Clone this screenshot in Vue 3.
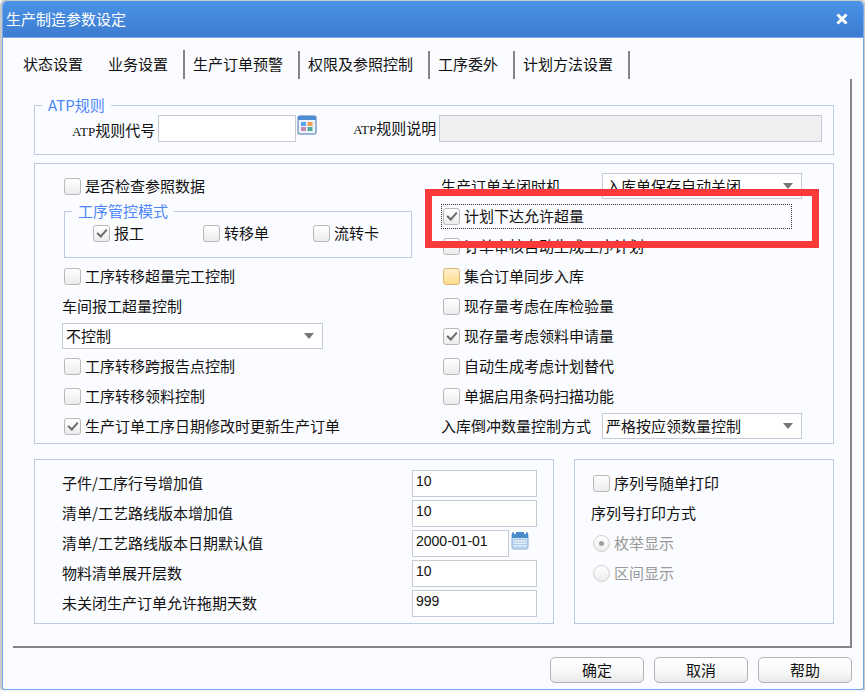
<script setup>
import {ref, reactive} from "vue";

const tabs = ["状态设置", "业务设置", "生产订单预警", "权限及参照控制", "工序委外", "计划方法设置"]
const activeTab = ref(1)

const atp = reactive({code: "", desc: ""})

const modes = ref([
  {label: "报工", checked: true},
  {label: "转移单", checked: false},
  {label: "流转卡", checked: false},
])

const checkReference = ref(false)
const overFinish = ref(false)
const reportControl = ref("不控制")
const leftOptions = ref([
  {label: "工序转移跨报告点控制", checked: false},
  {label: "工序转移领料控制", checked: false},
  {label: "生产订单工序日期修改时更新生产订单", checked: true},
])

const closeTiming = ref("入库单保存自动关闭")
const backflush = ref("严格按应领数量控制")
const rightOptions = ref([
  {label: "计划下达允许超量", checked: true, focused: true},
  {label: "订单审核自动生成工序计划", checked: false},
  {label: "集合订单同步入库", checked: false, hot: true},
  {label: "现存量考虑在库检验量", checked: false},
  {label: "现存量考虑领料申请量", checked: true},
  {label: "自动生成考虑计划替代", checked: false},
  {label: "单据启用条码扫描功能", checked: false},
])

const defaults = ref([
  {label: "子件/工序行号增加值", value: "10"},
  {label: "清单/工艺路线版本增加值", value: "10"},
  {label: "清单/工艺路线版本日期默认值", value: "2000-01-01", date: true},
  {label: "物料清单展开层数", value: "10"},
  {label: "未关闭生产订单允许拖期天数", value: "999"},
])

const printSerial = ref(false)
const printMode = ref("枚举显示")
</script>

<template>
  <main class="dialog">
    <header class="title-bar">
      <h1>生产制造参数设定</h1>
      <button class="close" type="button" aria-label="关闭">
        <svg width="12" height="12" viewBox="0 0 12 12">
          <path d="M1.500 1.500L10.500 10.500M10.500 1.500L1.500 10.500" stroke="#fff" stroke-width="3"/>
        </svg>
      </button>
    </header>

    <nav class="tabs">
      <button
          v-for="(tab, index) in tabs"
          :key="tab"
          type="button"
          :class="['tab', { active: index == activeTab }]"
          @click="activeTab = index">
        {{ tab }}
      </button>
    </nav>

    <section class="panel">
      <fieldset class="group atp">
        <legend>ATP规则</legend>
        <div class="atp-row">
          <label class="code-label" for="atp-code"><span class="latin">ATP</span>规则代号</label>
          <input id="atp-code" class="text code" type="text" v-model="atp.code"/>
          <button class="icon-button" type="button" aria-label="选择规则">
            <svg width="20" height="20" viewBox="0 0 20 20">
              <rect x="1" y="1" width="18" height="18" rx="2" fill="#eef4fc" stroke="#7d9fcb" stroke-width="1.5"/>
              <path d="M1 5V2.500Q1 1 2.500 1H17.500Q19 1 19 2.500V5Z" fill="#4f8bd0"/>
              <rect x="4" y="7" width="5" height="4" fill="#5aa5f0"/>
              <rect x="10.500" y="7" width="5" height="4" fill="#f0a050"/>
              <rect x="4" y="12" width="5" height="4" fill="#c888b8"/>
              <rect x="10.500" y="12" width="5" height="4" fill="#50aaa0"/>
            </svg>
          </button>
          <label class="desc-label" for="atp-desc"><span class="latin">ATP</span>规则说明</label>
          <input id="atp-desc" class="text desc" type="text" v-model="atp.desc" disabled/>
        </div>
      </fieldset>

      <div class="group business">
        <div class="column">
          <label class="row check">
            <input type="checkbox" v-model="checkReference"/>
            <span>是否检查参照数据</span>
          </label>
          <fieldset class="group modes">
            <legend>工序管控模式</legend>
            <div class="mode-list">
              <label v-for="mode in modes" :key="mode.label" class="check">
                <input type="checkbox" v-model="mode.checked"/>
                <span>{{ mode.label }}</span>
              </label>
            </div>
          </fieldset>
          <label class="row check">
            <input type="checkbox" v-model="overFinish"/>
            <span>工序转移超量完工控制</span>
          </label>
          <label class="row" for="report-control">车间报工超量控制</label>
          <div class="row">
            <div class="select wide">
              <select id="report-control" v-model="reportControl">
                <option>不控制</option>
                <option>严格控制</option>
              </select>
            </div>
          </div>
          <label v-for="item in leftOptions" :key="item.label" class="row check">
            <input type="checkbox" v-model="item.checked"/>
            <span>{{ item.label }}</span>
          </label>
        </div>

        <div class="column">
          <div class="row">
            <label class="select-label" for="close-timing">生产订单关闭时机</label>
            <div class="select">
              <select id="close-timing" v-model="closeTiming">
                <option>入库单保存自动关闭</option>
                <option>手工关闭</option>
              </select>
            </div>
          </div>
          <div v-for="item in rightOptions" :key="item.label" class="row option">
            <label :class="['check', { focused: item.focused }]">
              <input type="checkbox" :class="{ hot: item.hot }" v-model="item.checked"/>
              <span>{{ item.label }}</span>
            </label>
            <div v-if="item.focused" class="callout"></div>
          </div>
          <div class="row">
            <label class="select-label" for="backflush">入库倒冲数量控制方式</label>
            <div class="select">
              <select id="backflush" v-model="backflush">
                <option>严格按应领数量控制</option>
                <option>不控制</option>
              </select>
            </div>
          </div>
        </div>
      </div>

      <div class="bottom">
        <div class="group defaults">
          <div v-for="(item, index) in defaults" :key="item.label" class="row">
            <label :for="'default' + index">{{ item.label }}</label>
            <div class="field">
              <input :id="'default' + index" class="text" type="text" v-model="item.value"/>
              <button v-if="item.date" class="icon-button date" type="button" aria-label="选择日期">
                <svg width="18" height="20" viewBox="0 0 18 20">
                  <rect x="1" y="3" width="16" height="16" rx="2" fill="#cfe2f8" stroke="#7eaee0"/>
                  <path d="M1 8V4Q1 2 3 2H15Q17 2 17 4V8Z" fill="#4a8ccb"/>
                  <path d="M4 1V4M14 1V4" stroke="#fff" stroke-width="2"/>
                  <path d="M3 9.500H15V17H3ZM6 9.500V17M9 9.500V17M12 9.500V17M3 12H15M3 14.500H15" fill="#fff" stroke="#a9c8ea" stroke-width="1"/>
                </svg>
              </button>
            </div>
          </div>
        </div>

        <div class="group serial">
          <label class="row check">
            <input type="checkbox" v-model="printSerial"/>
            <span>序列号随单打印</span>
          </label>
          <div class="row">序列号打印方式</div>
          <label v-for="mode in ['枚举显示', '区间显示']" :key="mode" class="row check disabled">
            <input type="radio" name="print-mode" :value="mode" v-model="printMode" disabled/>
            <span>{{ mode }}</span>
          </label>
        </div>
      </div>
    </section>

    <footer class="actions">
      <button type="button">确定</button>
      <button type="button">取消</button>
      <button type="button">帮助</button>
    </footer>
  </main>
</template>

<style>
body {
  background-color: #f4f6f8;
}
</style>

<style scoped>
.dialog {
  margin: 1px 1px 0 2px;
  border: 1px solid #74a7ec;
  border-top: none;
  border-radius: 5px 5px 3px 3px;
  overflow: hidden;
  background-color: #fbfcff;
  box-shadow: 0 0 0 2px #c9c9c7;
  color: #111;
  font-family: "Noto Sans CJK SC", sans-serif;
  font-size: 15px;
  line-height: 20px;
}

button,
input,
select {
  box-sizing: border-box;
  margin: 0;
  font: inherit;
  color: inherit;
}

.title-bar {
  display: flex;
  align-items: center;
  justify-content: space-between;
  height: 36px;
  padding: 0 15px 0 3px;
  border-bottom: 1px solid #79aaf0;
  background: linear-gradient(#4a93e8, #3d7cd0);
  color: #fff;
}

h1 {
  margin: 0;
  font-size: 15px;
  font-weight: 400;
}

.close {
  display: flex;
  padding: 0;
  border: none;
  background: none;
}

.tabs {
  display: flex;
  align-items: flex-end;
  height: 29px;
  padding: 12px 12px 0;
}

.tab {
  height: 28px;
  padding: 0 15px 2px 8px;
  border: none;
  border-right: 2px solid #858683;
  background: none;
}

.tab:first-child {
  border-right-color: transparent;
}

.tab.active {
  height: 29px;
}

.panel {
  margin: 0 11px 0 10px;
  padding: 16px 16px 22px 21px;
  border-right: 2px solid #858683;
  border-bottom: 2px solid #858683;
}

.group {
  min-width: 0;
  margin: 0;
  border: 1px solid #bccde0;
}

legend {
  padding: 0 6px;
  color: #4b86fa;
}

.atp {
  padding: 0 11px 12px 7px;
}

.atp-row {
  display: flex;
  padding-left: 30px;
}

.latin {
  font-family: "Liberation Serif", serif;
  font-size: 13px;
}

.code-label {
  align-self: flex-end;
}

.desc-label {
  align-self: center;
  margin-left: 36px;
}

.text {
  height: 27px;
  padding: 0 3px 5px;
  border: 1px solid #c6cad4;
  border-radius: 0;
  background-color: #fff;
  font-family: "Liberation Sans", sans-serif;
  font-size: 14px;
}

.text.code {
  width: 138px;
  margin-left: 3px;
}

.text.desc {
  flex: 1;
  min-width: 0;
  margin-left: 3px;
}

.text:disabled {
  background-color: #efefef;
}

.icon-button {
  display: flex;
  align-self: flex-start;
  padding: 0 0 0 1px;
  border: none;
  background: none;
}

.business {
  display: grid;
  grid-template-columns: 1fr 1fr;
  margin-top: 8px;
  padding: 7px 13px 2px 27px;
}

.row {
  display: flex;
  align-items: center;
  height: 30px;
}

.check {
  display: flex;
  align-items: center;
  gap: 4px;
  padding-left: 2px;
}

input[type="checkbox"],
input[type="radio"] {
  position: relative;
  flex: none;
  width: 17px;
  height: 17px;
  appearance: none;
  border: 1px solid #b9b9b9;
  border-radius: 3px;
  background: linear-gradient(#fff, #ececec);
}

input[type="checkbox"]:checked::after {
  content: "";
  position: absolute;
  left: 5px;
  top: 1px;
  width: 4px;
  height: 8px;
  border: solid #6a6a6a;
  border-width: 0 2px 2px 0;
  transform: rotate(42deg);
}

input[type="checkbox"].hot {
  border-color: #dcb678;
  background: linear-gradient(#fff0cc, #fddc8a);
}

input[type="radio"] {
  border-color: #cfcfcf;
  border-radius: 50%;
}

input[type="radio"]:checked::after {
  content: "";
  position: absolute;
  left: 5px;
  top: 5px;
  width: 5px;
  height: 5px;
  border-radius: 50%;
  background-color: #a0a0a0;
}

.modes {
  width: 348px;
  height: 57px;
  box-sizing: border-box;
  margin: 0 0 3px 2px;
  padding: 0 0 0 7px;
}

.mode-list {
  display: grid;
  grid-template-columns: 110px 110px 110px;
  padding: 2px 0 0 19px;
}

.select {
  position: relative;
  width: 200px;
}

.select.wide {
  width: 261px;
}

.select::after {
  content: "";
  position: absolute;
  top: 10px;
  right: 9px;
  border: 5px solid transparent;
  border-top: 6px solid #777;
  border-bottom: none;
  pointer-events: none;
}

select {
  display: block;
  width: 100%;
  height: 26px;
  padding: 0 3px;
  appearance: none;
  border: 1px solid #c6cad4;
  border-radius: 0;
  background-color: #fff;
}

.select-label {
  width: 161px;
}

.option {
  position: relative;
}

.focused {
  width: 351px;
  height: 25px;
  box-sizing: border-box;
  border: 1px dotted #333;
  padding-left: 1px;
}

.callout {
  position: absolute;
  z-index: 1;
  top: -12px;
  right: 1px;
  bottom: -17px;
  left: -16px;
  border: 7px solid #fd393a;
  pointer-events: none;
}

.bottom {
  display: grid;
  grid-template-columns: 2fr 1fr;
  gap: 20px;
  margin-top: 15px;
}

.defaults {
  padding: 8px 16px 5px 27px;
}

.defaults .row {
  justify-content: space-between;
}

.field {
  display: flex;
  gap: 1px;
  width: 125px;
}

.field .text {
  flex: 1;
  min-width: 0;
}

.date {
  width: 27px;
}

.serial {
  padding: 8px 16px 5px;
}

.disabled {
  color: #999;
}

.actions {
  display: flex;
  justify-content: flex-end;
  gap: 10px;
  padding: 9px 11px 6px;
}

.actions button {
  width: 94px;
  height: 26px;
  padding: 0;
  border: 1px solid #b3b3b3;
  border-radius: 5px;
  background: linear-gradient(#fff, #fafafa 50%, #e9e9e9);
}
</style>
